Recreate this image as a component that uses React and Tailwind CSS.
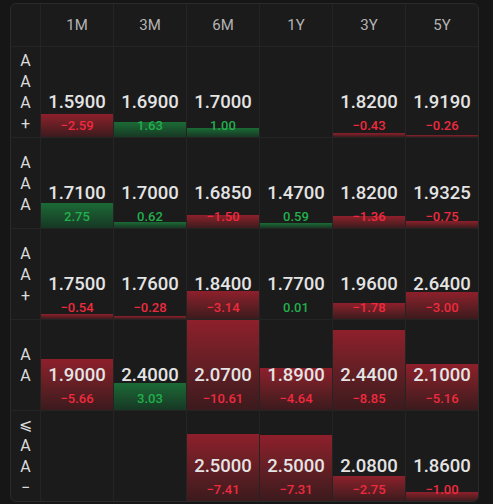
import React from 'react';

const periods = ['1M', '3M', '6M', '1Y', '3Y', '5Y'];

const rows = [
  {
    label: ['A', 'A', 'A', '+'],
    cells: [['1.5900', -2.59], ['1.6900', 1.63], ['1.7000', 1.0], null, ['1.8200', -0.43], ['1.9190', -0.26]],
  },
  {
    label: ['A', 'A', 'A'],
    cells: [['1.7100', 2.75], ['1.7000', 0.62], ['1.6850', -1.5], ['1.4700', 0.59], ['1.8200', -1.36], ['1.9325', -0.75]],
  },
  {
    label: ['A', 'A', '+'],
    cells: [['1.7500', -0.54], ['1.7600', -0.28], ['1.8400', -3.14], ['1.7700', 0.01], ['1.9600', -1.78], ['2.6400', -3.0]],
  },
  {
    label: ['A', 'A'],
    cells: [['1.9000', -5.66], ['2.4000', 3.03], ['2.0700', -10.61], ['1.8900', -4.64], ['2.4400', -8.85], ['2.1000', -5.16]],
  },
  {
    label: ['⩽', 'A', 'A', '−'],
    cells: [null, null, ['2.5000', -7.41], ['2.5000', -7.31], ['2.0800', -2.75], ['1.8600', -1.0]],
  },
];

const fmt = (v) => (v < 0 ? '−' + Math.abs(v).toFixed(2) : v.toFixed(2));

const Cell = ({ cell }) => {
  if (!cell) return <div className="h-[90px] border-l border-[#242424]" />;
  const [price, change] = cell;
  const up = change >= 0;
  const barH = Math.min(Math.abs(change) / 10, 1) * 90;
  return (
    <div className="relative h-[90px] border-l border-[#242424]">
      <div
        className={`absolute bottom-0 left-0 right-0 bg-linear-to-b ${
          up ? 'from-[#1b6b36] to-[#163824]' : 'from-[#8e1f2b] to-[#3c1a1d]'
        }`}
        style={{ height: barH }}
      />
      <div className="relative flex h-full flex-col items-center justify-end pb-[3px]">
        <span className="text-[18.5px] leading-[24px] font-medium text-[#e4e4e4]">{price}</span>
        <span
          className={`mt-[4px] text-[13px] leading-[16px] font-medium ${
            up ? 'text-[#22b04c]' : 'text-[#f02a3e]'
          }`}
        >
          {fmt(change)}
        </span>
      </div>
    </div>
  );
};

export default function App() {
  return (
    <div
      className="min-h-screen w-[493px] h-[504px] bg-[#161616] pl-[10px] pt-[3px]"
      style={{ fontFamily: "Roboto, 'Liberation Sans', sans-serif" }}
    >
      <div className="w-[469px] overflow-hidden rounded-[6px] border border-[#2a2a2a] bg-[#1b1b1b]">
        <div className="grid grid-cols-[29px_repeat(6,73px)] h-[43px] border-b border-[#242424]">
          <div />
          {periods.map((p) => (
            <div
              key={p}
              className="flex items-center justify-center border-l border-[#242424] text-[15px] text-[#b4b4b4]"
            >
              {p}
            </div>
          ))}
        </div>
        {rows.map((row, i) => (
          <div
            key={i}
            className={`grid grid-cols-[29px_repeat(6,73px)] ${i < rows.length - 1 ? 'border-b border-[#242424]' : ''}`}
          >
            <div className="flex h-[90px] flex-col items-center justify-center text-[16px] leading-[21px] text-[#dcdcdc]">
              {row.label.map((l, j) => (
                <span key={j}>{l}</span>
              ))}
            </div>
            {row.cells.map((c, j) => (
              <Cell key={j} cell={c} />
            ))}
          </div>
        ))}
      </div>
    </div>
  );
}
